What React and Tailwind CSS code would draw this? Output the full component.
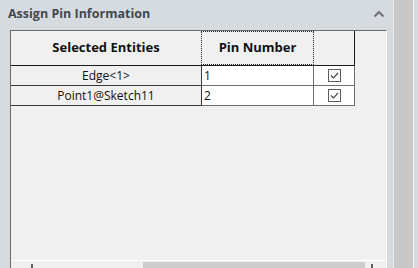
import React from 'react';

const rows = [
  { entity: 'Edge<1>', pin: '1' },
  { entity: 'Point1@Sketch11', pin: '2' },
];

function CheckBox() {
  return (
    <div className="w-[13px] h-[13px] border border-[#5c5c5c] bg-white flex items-center justify-center">
      <svg width="9" height="7" viewBox="0 0 9 7">
        <path d="M1 3.5 L3.5 6 L8 1" fill="none" stroke="#4a4a4a" strokeWidth="1.2" />
      </svg>
    </div>
  );
}

function App() {
  return (
    <div
      className="w-[418px] h-[268px] bg-[#d6dbe0] flex overflow-hidden text-[#111]"
      style={{ fontFamily: '"Open Sans", "Noto Sans", sans-serif' }}
    >
      {/* property panel */}
      <div className="w-[387px] flex flex-col">
        <div className="h-[30px] shrink-0 flex items-start justify-between pl-[8px] pr-[2px] pt-[6px]">
          <span className="text-[12.5px] leading-[16px] font-bold text-[#43484e]">Assign Pin Information</span>
          <svg width="12" height="8" viewBox="0 0 12 8" className="mt-[4px]">
            <path d="M1.5 6.5 L6 2 L10.5 6.5" fill="none" stroke="#6f747a" strokeWidth="2" />
          </svg>
        </div>

        <div className="ml-[10px] h-[248px] shrink-0 bg-[#f0f0f0] border-l border-t border-[#6a6a6a] border-r border-r-white flex flex-col">
          {/* header row */}
          <div className="flex w-[344px] border-b border-[#1a1a1a] text-[13px] font-bold">
            <div className="w-[190px] h-[34px] flex items-center justify-center">Selected Entities</div>
            <div className="w-[113px] h-[34px] flex items-center justify-center border border-dotted border-[#222]">
              Pin Number
            </div>
            <div className="w-[41px] h-[34px] border-r border-[#1a1a1a]" />
          </div>

          {rows.map((r) => (
            <div key={r.pin} className="flex w-[344px] text-[12px] h-[20px]">
              <div className="w-[191px] border-r border-b border-[#3a3a3a] flex items-center justify-center">
                {r.entity}
              </div>
              <div className="w-[112px] bg-white border-r border-b border-[#6e6e6e] flex items-center pl-[2px]">
                {r.pin}
              </div>
              <div className="w-[41px] bg-white border-r border-b border-[#6e6e6e] flex items-center justify-center">
                <CheckBox />
              </div>
            </div>
          ))}

          <div className="flex-1" />

          {/* horizontal scrollbar */}
          <div className="border-t border-white h-[18px] shrink-0 flex items-start">
            <div className="w-[22px] flex justify-end pt-[3px]">
              <div className="w-[2px] h-[5px] bg-[#606060]" />
            </div>
            <div className="w-[110px]" />
            <div className="w-[222px] h-[17px] bg-[#cdcdcd] mt-[1px]" />
            <div className="w-[8px] flex justify-end pt-[3px]">
              <div className="w-[2px] h-[5px] bg-[#606060]" />
            </div>
          </div>
        </div>
      </div>

      {/* vertical scrollbar */}
      <div className="ml-[6px] w-[20px] bg-[#c8c8c8] border-l border-[#e9ebee]" />
      <div className="w-[1px] bg-[#f4f5f6]" />
    </div>
  );
}

export default App;
